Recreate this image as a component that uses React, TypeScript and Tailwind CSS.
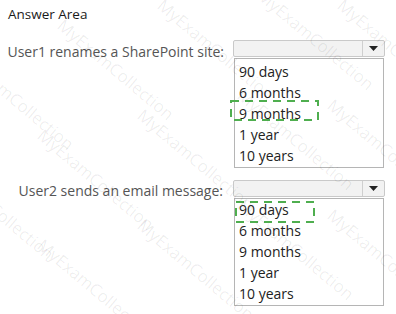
const options = ['90 days', '6 months', '9 months', '1 year', '10 years'];

const marks = [
  { x: -40, y: 40 }, { x: 60, y: 10 }, { x: 160, y: -10 }, { x: 260, y: -20 }, { x: 340, y: -10 },
  { x: -60, y: 150 }, { x: 40, y: 120 }, { x: 140, y: 100 }, { x: 240, y: 80 }, { x: 330, y: 90 },
  { x: -60, y: 260 }, { x: 40, y: 230 }, { x: 140, y: 210 }, { x: 240, y: 190 }, { x: 330, y: 200 },
];

function DashedBox({ width, height }: { width: number; height: number }) {
  return (
    <svg width={width} height={height} className="block">
      <rect
        x={1}
        y={1}
        width={width - 2}
        height={height - 2}
        fill="none"
        stroke="#4fae4f"
        strokeWidth={2}
        strokeDasharray="8 6"
      />
    </svg>
  );
}

function Dropdown({
  selected,
  box,
  listPad,
}: {
  selected: number;
  box: { left: number; top: number; width: number; height: number };
  listPad: string;
}) {
  return (
    <div className="w-[152px]">
      <div className="flex h-[17px] rounded-[2px] border border-[#c9c9c9] bg-[#f2f2f2]">
        <div className="flex-1" />
        <div className="flex w-[22px] items-center justify-center border-l border-[#cfcfcf]">
          <svg width="9" height="5" viewBox="0 0 9 5">
            <path d="M0 0 L9 0 L4.5 5 Z" fill="#222" />
          </svg>
        </div>
      </div>
      <div className={`ml-[1px] mt-[1px] w-[150px] border border-[#b5b5b5] bg-white ${listPad}`}>
        {options.map((o, i) => (
          <div key={o} className="relative h-[21px] pl-[4px] text-[14px] leading-[21px] text-[#222]">
            {o}
            {i === selected && (
              <div className="absolute" style={{ left: box.left, top: box.top }}>
                <DashedBox width={box.width} height={box.height} />
              </div>
            )}
          </div>
        ))}
      </div>
    </div>
  );
}

export default function App() {
  return (
    <div className="relative h-[314px] w-[396px] overflow-hidden bg-white font-['Open_Sans','Noto_Sans',sans-serif]">
      <div className="ml-2 mt-[6px] text-[13.5px] leading-[16px] text-[#1a1a1a]">Answer Area</div>

      {/* User1 row */}
      <div className="mt-[18px] flex items-start">
        <div className="w-[233px] pr-[9px] pt-[3px] text-right text-[14px] leading-[17px] text-[#555]">
          User1 renames a SharePoint site:
        </div>
        <Dropdown selected={2} box={{ left: -5, top: -3, width: 89, height: 21 }} listPad="pt-[2px] pb-[1px]" />
      </div>

      {/* User2 row */}
      <div className="mt-[12px] flex items-start">
        <div className="w-[233px] pr-[10px] pt-[2px] text-right text-[14px] leading-[17px] text-[#555]">
          User2 sends an email message:
        </div>
        <Dropdown selected={0} box={{ left: 0, top: 2, width: 80, height: 22 }} listPad="pb-[1px]" />
      </div>

      {/* watermark */}
      <div className="pointer-events-none absolute inset-0">
        {marks.map((m, i) => (
          <span
            key={i}
            className="absolute origin-left rotate-[40deg] whitespace-nowrap text-[17px] text-[#000]/[0.07]"
            style={{ left: m.x, top: m.y }}
          >
            MyExamCollection
          </span>
        ))}
      </div>
    </div>
  );
}
